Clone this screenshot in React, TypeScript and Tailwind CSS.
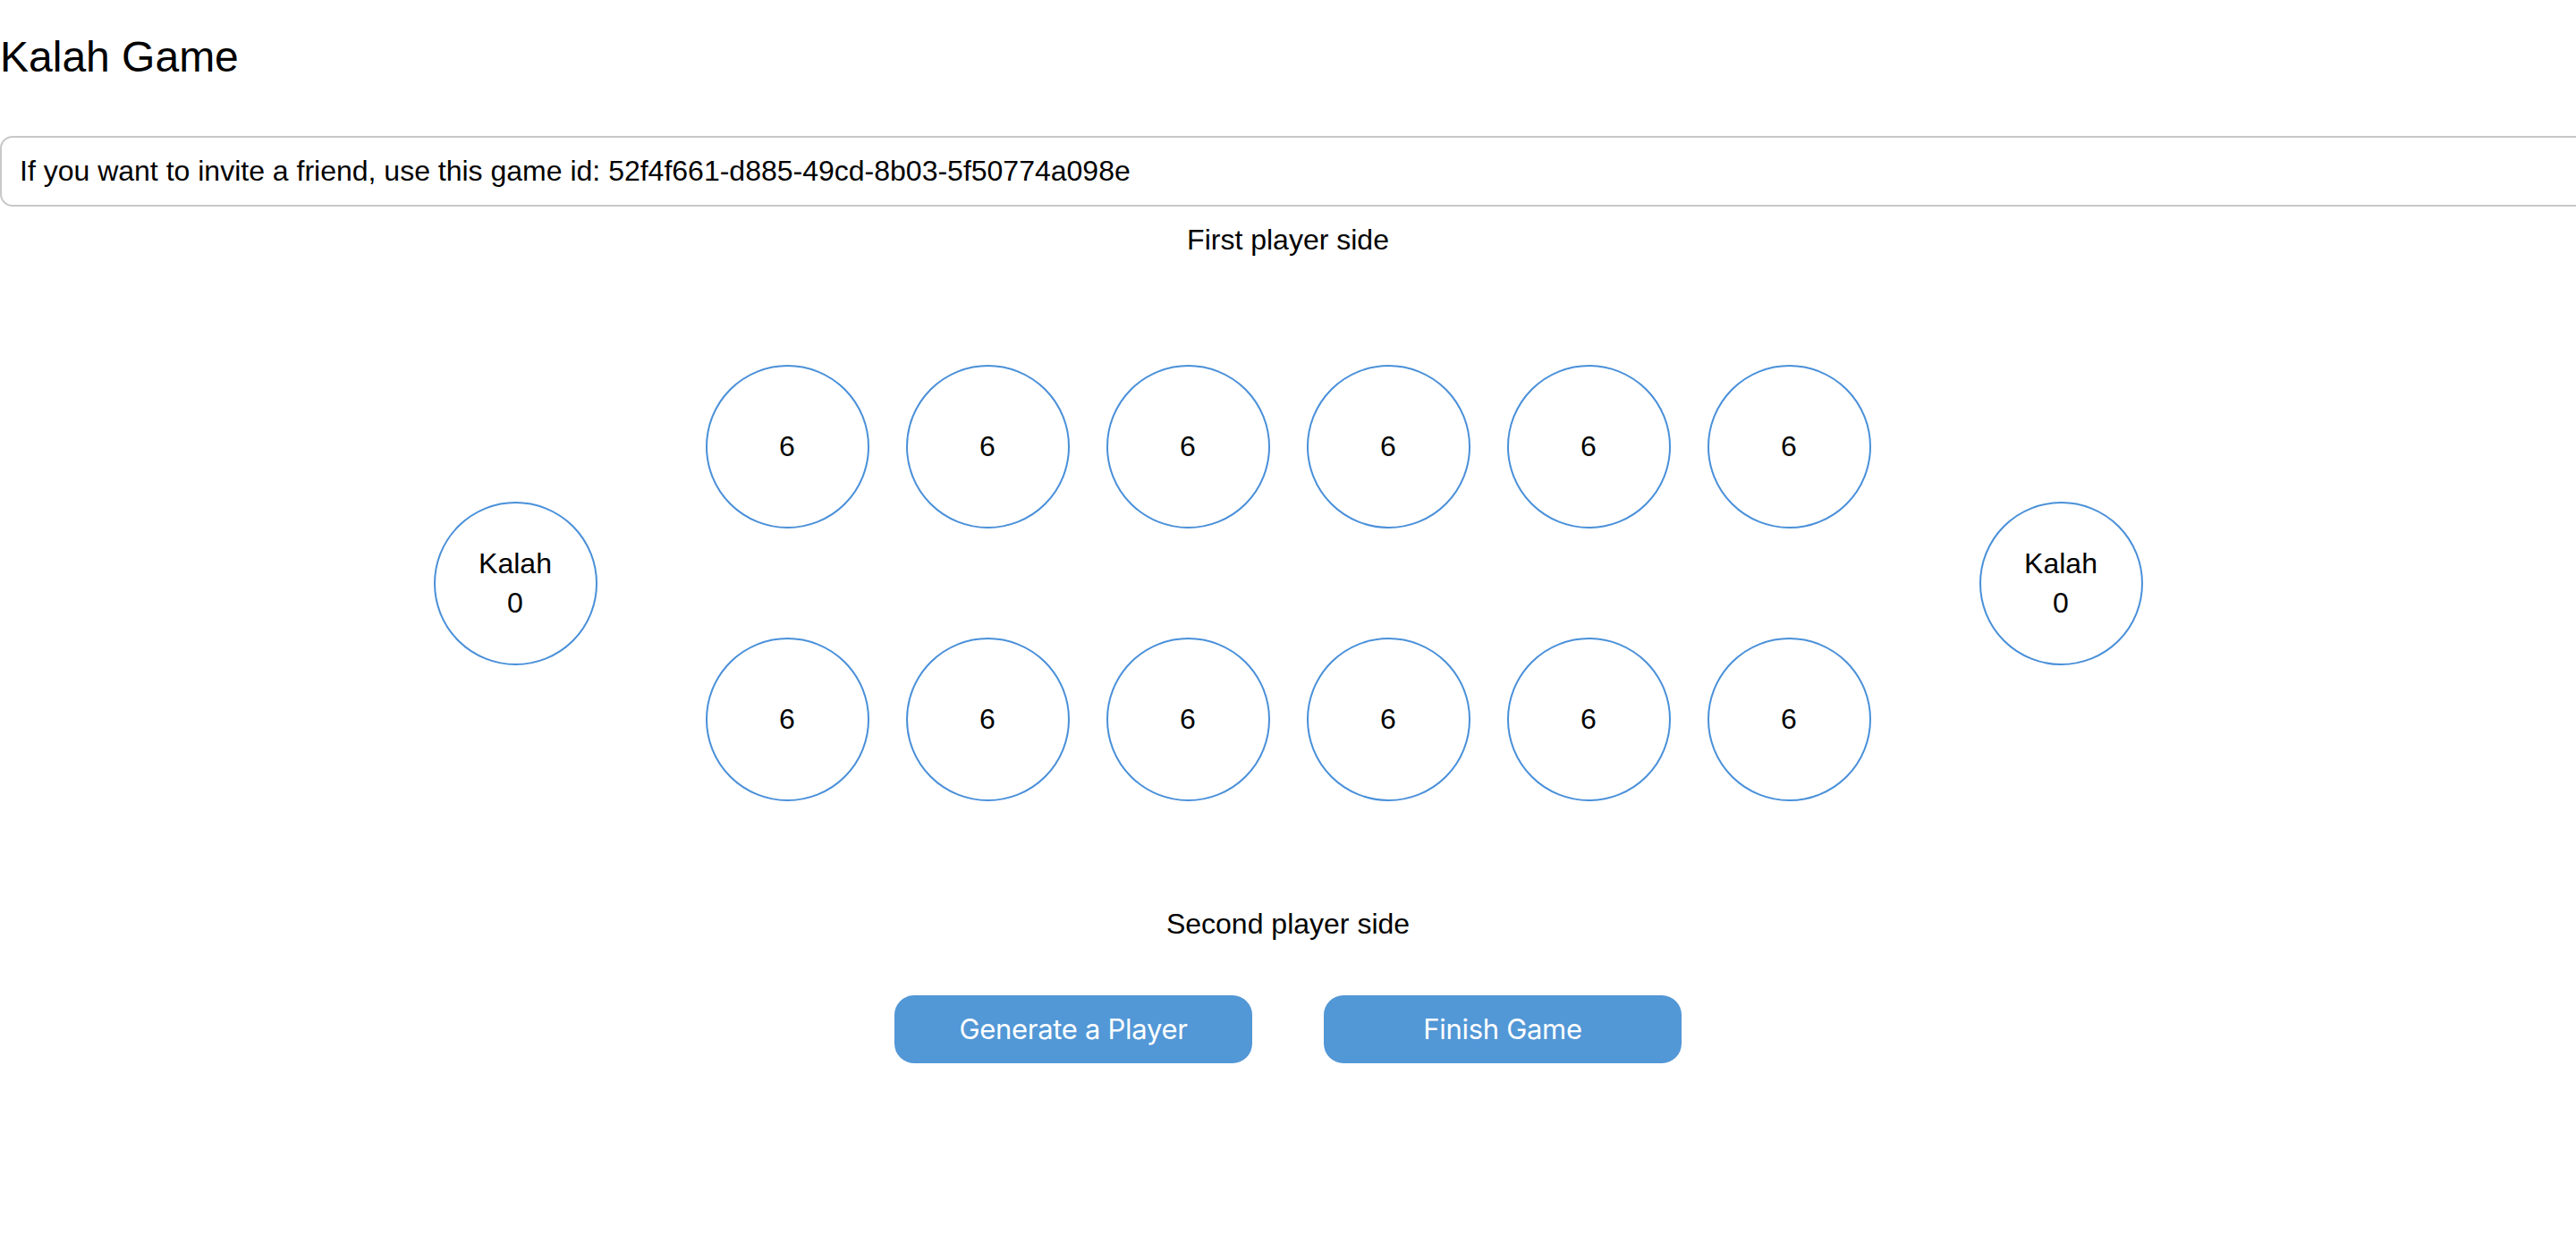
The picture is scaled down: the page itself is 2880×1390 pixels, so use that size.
import React from 'react';

const GAME_ID = '52f4f661-d885-49cd-8b03-5f50774a098e';
const topPits = [6, 6, 6, 6, 6, 6];
const bottomPits = [6, 6, 6, 6, 6, 6];

const Pit: React.FC<{ value: number }> = ({ value }) => (
  <div className="w-[183px] h-[183px] rounded-full border-2 border-[#4a90d9] flex items-center justify-center text-[32px] leading-[37px] text-black">
    {value}
  </div>
);

const Kalah: React.FC<{ score: number }> = ({ score }) => (
  <div className="w-[183px] h-[183px] shrink-0 rounded-full border-2 border-[#4a90d9] flex flex-col items-center justify-center text-[32px] leading-[44px] text-black">
    <span>Kalah</span>
    <span>{score}</span>
  </div>
);

const App: React.FC = () => {
  return (
    <div className="min-h-[1390px] w-full overflow-hidden bg-white text-black font-['Liberation_Sans',Arial,sans-serif]">
      <h1 className="pt-[36px] text-[48px] leading-[55px] font-normal">Kalah Game</h1>

      <div className="mt-[61px] w-[calc(100%+40px)] rounded-[14px] border-2 border-[#c8c8c8] px-[20px] py-[19px] text-[32px] leading-[37px]">
        If you want to invite a friend, use this game id: {GAME_ID}
      </div>

      <p className="mt-[19px] text-center text-[32px] leading-[37px]">First player side</p>

      <div className="mt-[121px] flex items-center justify-center gap-[121px]">
        <Kalah score={0} />
        <div className="flex flex-col gap-[122px]">
          <div className="flex gap-[41px]">
            {topPits.map((v, i) => (
              <Pit key={i} value={v} />
            ))}
          </div>
          <div className="flex gap-[41px]">
            {bottomPits.map((v, i) => (
              <Pit key={i} value={v} />
            ))}
          </div>
        </div>
        <Kalah score={0} />
      </div>

      <p className="mt-[119px] text-center text-[32px] leading-[37px]">Second player side</p>

      <div className="mt-[61px] flex justify-center gap-[80px]">
        <button className="w-[400px] h-[76px] rounded-[22px] bg-[#5297d6] text-white text-[31px] font-['Inter',sans-serif] tracking-[-0.3px]">
          Generate a Player
        </button>
        <button className="w-[400px] h-[76px] rounded-[22px] bg-[#5297d6] text-white text-[31px] font-['Inter',sans-serif] tracking-[-0.3px]">
          Finish Game
        </button>
      </div>
    </div>
  );
};

export default App;
